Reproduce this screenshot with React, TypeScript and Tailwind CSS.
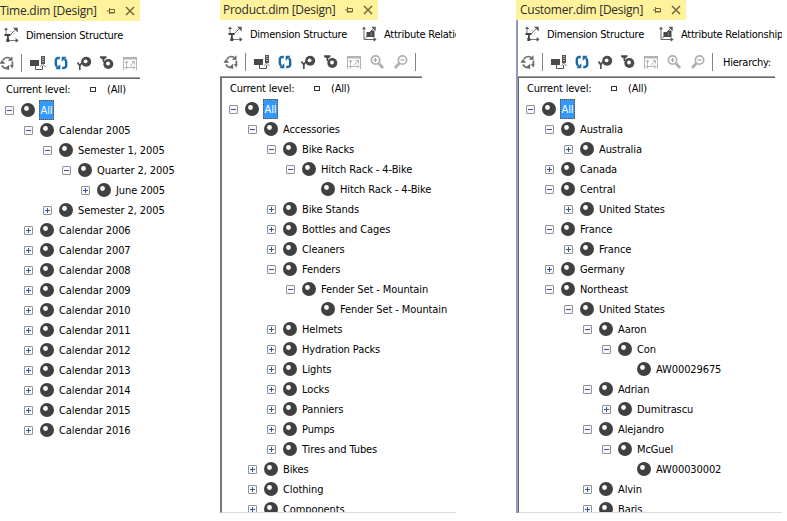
import React from "react";

type Node = { label: string; level: number; state: "open" | "closed" | "leaf" };

const n = (level: number, sign: string, label: string): Node => ({
  label,
  level,
  state: sign === "-" ? "open" : sign === "+" ? "closed" : "leaf",
});

const timeNodes: Node[] = [
  n(0, "-", "All"),
  n(1, "-", "Calendar 2005"),
  n(2, "-", "Semester 1, 2005"),
  n(3, "-", "Quarter 2, 2005"),
  n(4, "+", "June 2005"),
  n(2, "+", "Semester 2, 2005"),
  ...[2006, 2007, 2008, 2009, 2010, 2011, 2012, 2013, 2014, 2015, 2016].map((y) => n(1, "+", `Calendar ${y}`)),
];

const productNodes: Node[] = [
  n(0, "-", "All"),
  n(1, "-", "Accessories"),
  n(2, "-", "Bike Racks"),
  n(3, "-", "Hitch Rack - 4-Bike"),
  n(4, "", "Hitch Rack - 4-Bike"),
  n(2, "+", "Bike Stands"),
  n(2, "+", "Bottles and Cages"),
  n(2, "+", "Cleaners"),
  n(2, "-", "Fenders"),
  n(3, "-", "Fender Set - Mountain"),
  n(4, "", "Fender Set - Mountain"),
  n(2, "+", "Helmets"),
  n(2, "+", "Hydration Packs"),
  n(2, "+", "Lights"),
  n(2, "+", "Locks"),
  n(2, "+", "Panniers"),
  n(2, "+", "Pumps"),
  n(2, "+", "Tires and Tubes"),
  n(1, "+", "Bikes"),
  n(1, "+", "Clothing"),
  n(1, "+", "Components"),
];

const customerNodes: Node[] = [
  n(0, "-", "All"),
  n(1, "-", "Australia"),
  n(2, "+", "Australia"),
  n(1, "+", "Canada"),
  n(1, "-", "Central"),
  n(2, "+", "United States"),
  n(1, "-", "France"),
  n(2, "+", "France"),
  n(1, "+", "Germany"),
  n(1, "-", "Northeast"),
  n(2, "-", "United States"),
  n(3, "-", "Aaron"),
  n(4, "-", "Con"),
  n(5, "", "AW00029675"),
  n(3, "-", "Adrian"),
  n(4, "+", "Dumitrascu"),
  n(3, "-", "Alejandro"),
  n(4, "-", "McGuel"),
  n(5, "", "AW00030002"),
  n(3, "+", "Alvin"),
  n(3, "+", "Baris"),
];

function Icon({ children, className = "" }: { children: React.ReactNode; className?: string }) {
  return (
    <svg width="16" height="16" viewBox="0 0 16 16" fill="none" className={`shrink-0 ${className}`}>
      {children}
    </svg>
  );
}

const StructureIcon = () => (
  <Icon>
    <path d="M3 3v4.5M6.5 8.5l5.5-5.5M4 13.5h9" stroke="#777" />
    <path d="M1 3l2-2.6L5 3zM10 .8h4.7v4.6zM12.6 11l3 2.4-3 2.4z" fill="#555" />
    <path d="M1.5 7h6v2h-6zM4 9h1.8v3H4zM3.3 12h3v3h-3z" fill="#444" />
    <path d="M7 4.5h2M10 8l2-2" stroke="#ccc" />
  </Icon>
);

const RelationIcon = () => (
  <Icon>
    <path d="M3 3v10.5H13M4 12.5l3-3M9 6l4-4" stroke="#666" />
    <path d="M1 3.2L3 .6l2 2.6zM10.3.8h4.4v4.4zM12.6 11l3 2.4-3 2.4z" fill="#555" />
    <path d="M5.5 6h5v5h-5zM10 4.5h3.5V11H10z" fill="#484848" />
    <path d="M10.2 6.3v3.5" stroke="#aaa" strokeWidth=".7" />
  </Icon>
);

const RefreshIcon = () => (
  <Icon>
    <path d="M4 5.2A5.2 5.2 0 0 1 11 3.3M13.3 6.5a5.3 5.3 0 0 1-1 5M9.5 13.2A5.3 5.3 0 0 1 3 10.5" stroke="#707070" strokeWidth="1.8" />
    <path d="M8.7 5.8h4.8V1.3zM.5 8.8L3 5l3.2 3.8zM10.2 9.8v5.4l-3.6-2.5z" fill="#666" />
    <path d="M10.8 10.3l4-.5-1.5 4z" fill="#707070" />
  </Icon>
);

const ProcessIcon = () => (
  <Icon>
    <path d="M0 5h9v6H0z" fill="#4a4a4a" />
    <path d="M5.5 11v3.5h7V11" stroke="#555" />
    <path d="M11 1h4v8h-4z" fill="#555" />
    <path d="M12.5 2.5h1M12.5 4.5h1M12.5 6.5h1" stroke="#fff" />
    <path d="M10.5 11.5l2-2.5 3 3" stroke="#777" />
  </Icon>
);

const ReconnectIcon = () => (
  <Icon>
    <path d="M6.8 3H5.4C3.6 3 2.8 4 2.8 5.6V9c0 1.3.5 2.2 1.6 2.9M9.2 13h1.4c1.8 0 2.6-1 2.6-2.6V7c0-1.3-.5-2.2-1.6-2.9" stroke="#1769aa" strokeWidth="2.4" />
    <path d="M2.4 14.2h4.9V9.2zM13.6 1.8H8.7v5z" fill="#1769aa" />
  </Icon>
);

const MemberKeyIcon = () => (
  <Icon>
    <circle cx="10.2" cy="6.8" r="5" fill="#4a4a4a" />
    <circle cx="9.6" cy="6.3" r="1.9" fill="#fff" />
    <path d="M1.5 7.5l2.3 3.3L6 7.5M3.8 10.5V15" stroke="#4a4a4a" strokeWidth="1.7" />
  </Icon>
);

const MemberFilterIcon = () => (
  <Icon>
    <circle cx="9.3" cy="9" r="5" fill="#4a4a4a" />
    <circle cx="9" cy="8.5" r="1.9" fill="#fff" />
    <path d="M1 1.2h6.5v1.5L5.2 4.5V7H3.6V4.5L1 2.7z" fill="#4a4a4a" />
  </Icon>
);

const WindowIcon = () => (
  <Icon>
    <path d="M1.5 15V2.5h13V15" stroke="#b3b3b3" />
    <path d="M1 2h14v2.5H1z" fill="#b3b3b3" />
    <path d="M4.5 6.5v4M2.5 12.5h10M4.5 10.5v4M8 11l4-4M9.5 6.5h3v3M3 8l1.5-2L6 8M11 10.5l2 2-2 2" stroke="#b3b3b3" />
  </Icon>
);

const ZoomIcon = ({ plus = false }: { plus?: boolean }) => (
  <Icon>
    {plus ? (
      <>
        <circle cx="6.5" cy="6" r="4.2" stroke="#b0b0b0" strokeWidth="1.7" />
        <path d="M4.5 6h4M6.5 4v4" stroke="#a0a0a0" strokeWidth="1.2" />
        <path d="M9.5 9l4.5 5" stroke="#b0b0b0" strokeWidth="2.8" />
      </>
    ) : (
      <>
        <circle cx="9.5" cy="6" r="4.2" stroke="#b0b0b0" strokeWidth="1.7" />
        <path d="M7.5 6h4" stroke="#a0a0a0" strokeWidth="1.2" />
        <path d="M6.5 9L2 14" stroke="#b0b0b0" strokeWidth="2.8" />
      </>
    )}
  </Icon>
);

function Tab({ title, className }: { title: string; className: string }) {
  return (
    <div className={`flex shrink-0 items-center whitespace-nowrap bg-[#fff29d] ${className}`}>
      <span className="min-w-0 flex-1 font-['Open_Sans',sans-serif] text-[12px] leading-[18px] tracking-[-0.26px] text-[#2b2b2b] [font-stretch:normal]">
        {title}
      </span>
      <svg width="10" height="8" viewBox="0 0 10 8" fill="none" className="mr-[9px] shrink-0">
        <path d="M1 4h3M3.5 1v6M4 2.5h4.5v3.5H4M4 5.5h5" stroke="#75653b" />
      </svg>
      <svg width="10" height="10" viewBox="0 0 10 10" fill="none" className="mr-[5px] shrink-0">
        <path d="M1 1l8 8M9 1L1 9" stroke="#75653b" strokeWidth="1.5" />
      </svg>
    </div>
  );
}

const Separator = ({ className }: { className: string }) => <div className={`h-[18px] w-px shrink-0 bg-[#858585] ${className}`} />;

function Header({ full, hierarchy }: { full: boolean; hierarchy?: boolean }) {
  return (
    <div className="tracking-[-0.25px]">
      <div className="flex h-7 items-center whitespace-nowrap pl-1">
        <StructureIcon />
        <span className="ml-[7px] mt-0.5 w-[111px] shrink-0">Dimension Structure</span>
        {full && (
          <>
            <RelationIcon />
            <span className="ml-[7px] mt-0.5">Attribute Relationships</span>
          </>
        )}
      </div>
      <div className="flex h-7 items-center">
        <RefreshIcon />
        <Separator className="ml-1.5" />
        <div className="ml-2 flex gap-[7px]">
          <ProcessIcon />
          <ReconnectIcon />
          <MemberKeyIcon />
          <MemberFilterIcon />
          <WindowIcon />
          {full && <ZoomIcon plus />}
        </div>
        {full && (
          <>
            <div className="ml-2">
              <ZoomIcon />
            </div>
            <Separator className="ml-1.5" />
          </>
        )}
        {hierarchy && <span className="ml-2.5 mt-0.5">Hierarchy:</span>}
      </div>
    </div>
  );
}

const indents = ["pl-[5px]", "pl-[24px]", "pl-[43px]", "pl-[62px]", "pl-[81px]", "pl-[100px]"];

function Row({ node }: { node: Node }) {
  return (
    <div className={`flex h-5 shrink-0 items-center whitespace-nowrap ${indents[node.level]}`}>
      <svg width="9" height="9" viewBox="0 0 9 9" className="shrink-0">
        {node.state !== "leaf" && (
          <>
            <rect x=".5" y=".5" width="8" height="8" rx=".5" fill="#f8f8f8" stroke="#919191" />
            <path d="M2 4.5h5" stroke="#3a55a0" />
            {node.state === "closed" && <path d="M4.5 2v5" stroke="#3a55a0" />}
          </>
        )}
      </svg>
      <svg width="14" height="14" viewBox="0 0 14 14" className="ml-[7px] shrink-0">
        <circle cx="7" cy="7" r="7" fill="#404040" />
        <circle cx="5.5" cy="5.5" r="2.4" fill="#fff" />
      </svg>
      {node.level === 0 ? (
        <span className="ml-1 flex h-5 w-[15px] items-center justify-center border border-dotted border-[#6b4a1c] bg-[#3399ff] pt-0.5 text-white">
          {node.label}
        </span>
      ) : (
        <span className="ml-[5px] mt-0.5">{node.label}</span>
      )}
    </div>
  );
}

function Tree({ nodes }: { nodes: Node[] }) {
  return (
    <div className="flex w-[220px] flex-col tracking-[-0.1px]">
      <div className="flex h-[21px] shrink-0 items-center pl-1.5 tracking-[-0.2px]">
        <span className="w-[84px]">Current level:</span>
        <span className="h-[5px] w-1.5 border border-[#333]" />
        <span className="ml-[11px]">(All)</span>
      </div>
      {nodes.map((node, i) => (
        <Row key={i} node={node} />
      ))}
    </div>
  );
}

export default function App() {
  return (
    <div className="flex h-[521px] w-[787px] overflow-hidden bg-white font-['DejaVu_Sans_Condensed','DejaVu_Sans',sans-serif] text-[11px] leading-[14px] text-black [font-stretch:condensed]">
      <section className="flex w-[220px] shrink-0 flex-col">
        <Tab title="Time.dim [Design]" className="h-[21px] w-[140px]" />
        <div className="-ml-px h-14">
          <Header full={false} />
        </div>
        <div className="h-0.5 w-[140px] shrink-0 border-t border-[#a0a0a0] bg-[#696969]" />
        <Tree nodes={timeNodes} />
      </section>

      <section className="flex h-[513px] w-[236px] shrink-0 flex-col overflow-hidden">
        <Tab title="Product.dim [Design]" className="h-5 w-[158px] pl-[3px]" />
        <div className="h-14 shrink-0 overflow-hidden pl-[3px]">
          <Header full />
        </div>
        <div className="h-0.5 w-[202px] shrink-0 border-t border-[#a0a0a0] bg-[#696969]" />
        <div className="flex min-h-0 flex-1 flex-col overflow-hidden border-b border-l-2 border-b-[#dcdcdc] border-l-[#777] pl-0.5">
          <Tree nodes={productNodes} />
        </div>
      </section>

      <section className="ml-[60px] flex h-[513px] w-[266px] shrink-0 flex-col overflow-hidden">
        <Tab title="Customer.dim [Design]" className="h-5 w-[170px] pl-1" />
        <div className="flex min-h-0 flex-1 flex-col border-l-2 border-[#8e9bbc]">
          <div className="h-14 shrink-0 overflow-hidden pl-0.5">
            <Header full hierarchy />
          </div>
          <div className="h-0.5 w-[257px] shrink-0 border-t border-[#a0a0a0] bg-[#696969]" />
          <div className="flex min-h-0 flex-1 flex-col overflow-hidden border-b border-l border-b-[#dcdcdc] border-l-[#696969] pl-0.5">
            <Tree nodes={customerNodes} />
          </div>
        </div>
      </section>
    </div>
  );
}
